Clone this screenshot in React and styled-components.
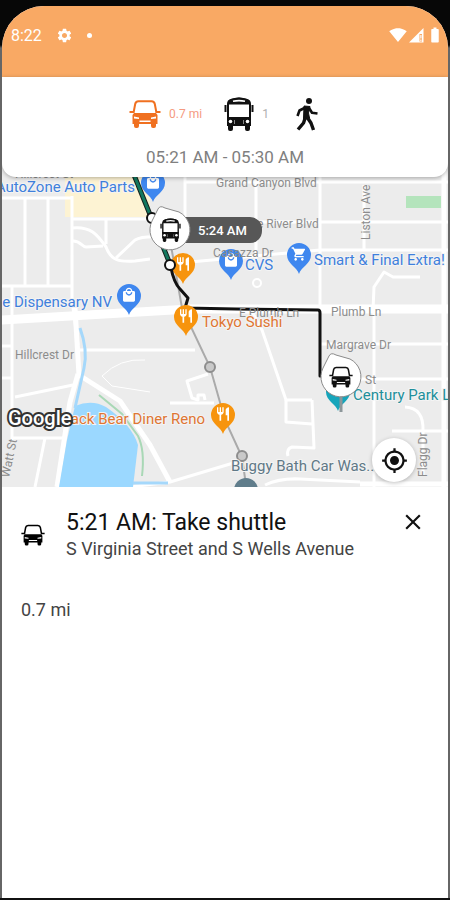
import React from 'react'
import styled, { createGlobalStyle } from 'styled-components'
import {
  MdBatteryFull,
  MdClose,
  MdLocalMall,
  MdMyLocation,
  MdRestaurant,
  MdSettings,
  MdShoppingCart,
  MdSignalWifi4Bar,
} from 'react-icons/md'

const roads = [
  'M0 198H72', 'M25 198V286', 'M48 198V286', 'M72 196V300L78 345', 'M0 286H72', 'M12 286V440',
  'M72 219H152', 'M106 219V244', 'M72 228C92 226 98 236 106 247C111 261 120 262 135 261L150 259',
  'M72 241C80 240 82 247 86 247L103 246', 'M116 258L135 240Q142 236 160 237L185 224V170',
  'M185 182H450', 'M256 170V262', 'M256 222H450', 'M190 262L320 250H450', 'M320 175V308', 'M364 185V250',
  'M373 310L374 287L384 272L393 277H420', 'M374 310V487', 'M0 346H12', 'M0 378H12', 'M80 350H195',
  'M15 397L73 385', 'M12 438H66', 'M45 438L35 487', 'M312 400H286L262 330L250 308',
  'M286 400L286 422L312 424', 'M312 400L314 448L292 447Q286 449 288 456', 'M130 487L170 482L240 461',
  'M320 344H450', 'M340 379H450', 'M392 431H450', 'M405 407Q424 408 423 431V475', 'M170 403H214',
  'M208 374L187 381L192 398L198 400L198 395H204L205 400', 'M265 485Q280 478 300 479L360 482',
]

const wideRoads = [
  'M78 374L70 402L57 487', 'M75 308L79 375L120 401L150 445L170 482', 'M444 170V487', 'M360 484H450',
]

const streets = [
  { x: 216, y: 187, text: 'Grand Canyon Blvd' },
  { x: 238, y: 228, text: 'Lake River Blvd' },
  { x: 213, y: 257, text: 'Casazza Dr' },
  { x: 239, y: 317, text: 'E Plumb Ln' },
  { x: 331, y: 316, text: 'Plumb Ln' },
  { x: 326, y: 349, text: 'Margrave Dr' },
  { x: 365, y: 384, text: 'St' },
  { x: 15, y: 359, text: 'Hillcrest Dr' },
  { x: 15, y: 178, text: 'Hillcrest St' },
]

const BusIcon = ({ detail = 'white', ...props }) => (
  <svg viewBox="0 0 30 34" {...props}>
    <path d="M4 21V7Q4 4 7 3Q15 0 23 3Q26 4 26 7V21Z" fill={detail} stroke="currentColor" strokeWidth="2" />
    <path d="M4 6Q4 3 7 2Q15 -1 23 2Q26 3 26 6V7.500H4Z" fill="currentColor" />
    <path d="M9 4.300Q15 3 21 4.300" fill="none" stroke={detail} strokeWidth="1.6" />
    <path d="M0.500 8H2.500V15H0.500ZM27.500 8H29.500V15H27.500Z" fill="currentColor" />
    <path d="M3 20H27V29H3Z" fill="currentColor" />
    <path d="M4 28H9V32Q9 34 7 34H6Q4 34 4 32ZM21 28H26V32Q26 34 24 34H23Q21 34 21 32Z" fill="currentColor" />
    <circle cx="6.500" cy="24.500" r="1.800" fill={detail} />
    <circle cx="23.500" cy="24.500" r="1.800" fill={detail} />
    <path d="M10.500 23V27M19.500 23V27" stroke={detail} strokeWidth="0.500" />
  </svg>
)

const ShuttleIcon = (props) => (
  <svg viewBox="0 0 32 28" {...props}>
    <path
      d="M4.500 13L6.200 4Q6.700 1.500 9.500 1.300H22.500Q25.300 1.500 25.800 4L27.500 13"
      fill="none" stroke="currentColor" strokeWidth="2"
    />
    <path d="M0.500 11H5V13H0.500ZM27 11H31.500V13H27Z" fill="currentColor" />
    <path
      fillRule="evenodd" fill="currentColor"
      d="M5 13H27L28.500 15V24H27V26Q27 28 25 28H24Q22 28 22 26V24H10V26Q10 28 8 28H7Q5 28 5 26V24H3.500V15ZM5 16.500V18.500L10 19V17.500ZM27 16.500V18.500L22 19V17.500ZM10.500 20.500V22H21.500V20.500Z"
    />
  </svg>
)

const WalkIcon = () => (
  <svg width="30" height="34" viewBox="-4 0 30 34" fill="none" stroke="currentColor" strokeLinejoin="round">
    <circle cx="14" cy="4" r="3" fill="currentColor" stroke="none" />
    <path d="M9 9L15 9.500L13.500 16L14.500 21L8.500 22Z" fill="currentColor" strokeWidth="1" />
    <path d="M10.500 10.500L4.500 13.500L2.500 19M14 11L17 15.800L22.500 16.500" strokeWidth="2.600" />
    <path d="M10.500 20L8.500 26L3 32.500M12 20L16 26L18.500 33" strokeWidth="3.400" />
  </svg>
)

const SignalIcon = () => (
  <svg width="15" height="15" viewBox="0 0 15 15">
    <path d="M0 14.500L14.500 0V14.500Z" fill="currentColor" />
    <path d="M10.500 6H13V13.500H10.500Z" fill="#f9a964" />
    <path d="M11.300 7H12.500V10.500H11.300ZM11.300 11.500H12.500V13H11.300Z" fill="currentColor" />
  </svg>
)

const Pin = ({ x, y, color, icon: Icon }) => (
  <g transform={`translate(${x} ${y})`}>
    <path d="M0 19C-2 12-12 9-12 0A12 12 0 0 1 12 0C12 9 2 12 0 19Z" fill={color} />
    {Icon && <Icon x="-8" y="-9" width="16" height="16" color="white" />}
  </g>
)

const VehicleMarker = ({ x, y, children }) => (
  <g transform={`translate(${x} ${y})`}>
    <path
      d="M-18 -9L-12 -21Q-10 -25 -5 -22L9 -18A20 20 0 1 1 -18 -9Z"
      fill="white" stroke="#8a8a8a" strokeWidth="1"
    />
    {children}
  </g>
)

function RouteMap() {
  return (
    <MapArea>
      <MapCanvas viewBox="2 165 446 322" preserveAspectRatio="xMidYMid slice" role="img" aria-label="Route map">
        <rect x="-400" y="165" width="1300" height="322" fill="#ececec" />
        <path d="M65 165H150V217H65Z" fill="#fdf3d3" />
        <path d="M406 196H441V208H406Z" fill="#b4e4bc" />
        <g fill="none" stroke="white" strokeLinejoin="round">
          {roads.map((d) => <path key={d} d={d} strokeWidth="3" />)}
          {wideRoads.map((d) => <path key={d} d={d} strokeWidth="5" />)}
          <path d="M0 320L190 309H450" strokeWidth="9" />
          <path d="M145 360Q120 358 102 376L112 386L150 392" strokeWidth="1" />
          <circle cx="257" cy="283" r="4" strokeWidth="2" />
        </g>
        <path d="M75 406Q92 399 106 407Q132 425 138 445L133 487H59L67 440Z" fill="#9bd8ff" />
        <path d="M80 328Q88 350 84 368L75 408M133 483H168" fill="none" stroke="#a5d8fb" strokeWidth="3" />
        <path d="M99 395L122 414L138 436Q145 450 142 476" fill="none" stroke="#a9d8b6" strokeWidth="2" />

        <path d="M170 240L182 308L210 367L225 420L242 457L246 485" fill="none" stroke="#aaa" strokeWidth="2" />
        <circle cx="210" cy="367" r="5" fill="#c9c9c9" stroke="#8d8d8d" strokeWidth="2" />
        <circle cx="242" cy="456" r="5" fill="#c9c9c9" stroke="#8d8d8d" strokeWidth="2" />

        <Pin x="153" y="183" color="#3f87ef" icon={MdLocalMall} />
        <Pin x="129" y="296" color="#3f87ef" icon={MdLocalMall} />
        <Pin x="231" y="261" color="#3f87ef" icon={MdLocalMall} />
        <Pin x="299" y="255" color="#3f87ef" icon={MdShoppingCart} />
        <Pin x="183" y="265" color="#f7940d" icon={MdRestaurant} />
        <Pin x="223" y="415" color="#f7940d" icon={MdRestaurant} />
        <circle cx="246" cy="490" r="12" fill="#607d8b" />
        <Pin x="338" y="392" color="#16a5bb" />
        <path d="M341 390V412" stroke="#8d979a" strokeWidth="3" />

        <g fill="none" strokeLinejoin="round">
          <path d="M130 165L153 222L170 264" stroke="#17231f" strokeWidth="5" />
          <path d="M130 165L153 222L170 264" stroke="#12785f" strokeWidth="3" />
          <path
            d="M171 268Q174 283 180 289L188 298L185 308L236 309L318 310Q320 310 320 313V376H326"
            stroke="#111" strokeWidth="3"
          />
        </g>
        <Pin x="186" y="317" color="#f7940d" icon={MdRestaurant} />

        {streets.map(({ x, y, text }) => <Street key={text} x={x} y={y}>{text}</Street>)}
        <Street transform="translate(370 240) rotate(-90)">Liston Ave</Street>
        <Street transform="translate(427 477) rotate(-90)">Flagg Dr</Street>
        <Street transform="translate(9 478) rotate(-78)">Watt St</Street>

        <Place x="135" y="192" textAnchor="end">AutoZone Auto Parts</Place>
        <Place x="245" y="270">CVS</Place>
        <Place x="314" y="265">Smart &amp; Final Extra!</Place>
        <Place x="112" y="307" textAnchor="end">The Dispensary NV</Place>
        <Place x="202" y="327" $color="#df7633">Tokyo Sushi</Place>
        <Place x="205" y="424" textAnchor="end" $color="#df7633">Black Bear Diner Reno</Place>
        <Place x="231" y="471" $color="#607886">Buggy Bath Car Was...</Place>
        <Place x="353" y="400" $color="#218f9b">Century Park Lofts</Place>

        <circle cx="152" cy="218" r="5" fill="white" stroke="#111" strokeWidth="2" />
        <circle cx="170" cy="265" r="5" fill="white" stroke="#111" strokeWidth="2" />

        <rect x="166" y="217" width="96" height="26" rx="12" fill="#575757" />
        <EtaText x="198" y="235">5:24 AM</EtaText>
        <VehicleMarker x={170} y={230}>
          <BusIcon x="-10" y="-12" width="21" height="24" color="#111" />
        </VehicleMarker>
        <VehicleMarker x={341} y={377}>
          <ShuttleIcon x="-12" y="-11" width="24" height="22" color="#111" />
        </VehicleMarker>
        <Attribution x="8" y="425">Google</Attribution>
      </MapCanvas>
      <LocateButton type="button" aria-label="Center on my location">
        <MdMyLocation size={27} />
      </LocateButton>
    </MapArea>
  )
}

export default function App() {
  return (
    <Screen>
      <GlobalStyle />
      <Phone>
        <StatusBar>
          <StatusGroup $gap={14}>
            <span>8:22</span>
            <MdSettings size={17} />
            <Dot />
          </StatusGroup>
          <StatusGroup $gap={2}>
            <MdSignalWifi4Bar size={18} />
            <SignalIcon />
            <MdBatteryFull size={18} />
          </StatusGroup>
        </StatusBar>
        <TripCard>
          <Legs>
            <Leg $active>
              <ShuttleIcon width="32" height="28" />
              <LegNote $color="#f59a80">0.7 mi</LegNote>
            </Leg>
            <Leg>
              <BusIcon width="30" height="34" />
              <LegNote>1</LegNote>
            </Leg>
            <Leg>
              <WalkIcon />
            </Leg>
          </Legs>
          <TripTime>05:21 AM - 05:30 AM</TripTime>
        </TripCard>
        <RouteMap />
        <StepPanel>
          <StepHeader>
            <ShuttleIcon width="24" height="24" />
            <StepText>
              <StepTitle>5:21 AM: Take shuttle</StepTitle>
              <StepPlace>S Virginia Street and S Wells Avenue</StepPlace>
            </StepText>
            <CloseButton type="button" aria-label="Close">
              <MdClose size={26} />
            </CloseButton>
          </StepHeader>
          <Distance>0.7 mi</Distance>
        </StepPanel>
      </Phone>
    </Screen>
  )
}

const GlobalStyle = createGlobalStyle`
  * {
    box-sizing: border-box;
  }
  body {
    margin: 0;
    font-family: Roboto, 'Liberation Sans', sans-serif;
  }
  h1, p {
    margin: 0;
  }
`
const Screen = styled.div`
  display: flex;
  min-height: 100vh;
  padding: 6px 2px 2px;
  background: linear-gradient(#070707 45px, #666 48px, #666 calc(100% - 2px), #111 calc(100% - 2px));
`
const Phone = styled.main`
  display: flex;
  flex-direction: column;
  flex: 1;
  min-width: 0;
  overflow: hidden;
  border-radius: 42px 42px 0 0;
  background: #fff;
`
const StatusBar = styled.div`
  display: flex;
  justify-content: space-between;
  height: 71px;
  padding: 18px 4px 0 9px;
  background: #f9a964;
  color: #fff;
  font-size: 16px;
`
const StatusGroup = styled.div`
  display: flex;
  align-items: center;
  gap: ${({ $gap }) => $gap}px;
  height: 22px;
`
const Dot = styled.span`
  width: 5px;
  height: 5px;
  border-radius: 50%;
  background: #fff;
`
const TripCard = styled.header`
  position: relative;
  z-index: 1;
  display: flex;
  flex-direction: column;
  align-items: center;
  gap: 16px;
  padding: 19px 0 10px;
  border-radius: 0 0 14px 14px;
  background: #fff;
  box-shadow: 0 1px 4px rgba(0, 0, 0, 0.3);
`
const Legs = styled.div`
  display: flex;
  align-items: center;
  gap: 22px;
`
const Leg = styled.div`
  display: flex;
  align-items: center;
  gap: 8px;
  height: 35px;
  color: ${({ $active }) => ($active ? '#f07020' : '#111')};
`
const LegNote = styled.span`
  color: ${({ $color = '#b0b0b0' }) => $color};
  font-size: 12px;
`
const TripTime = styled.p`
  color: #808080;
  font-size: 17px;
  line-height: 20px;
`
const MapArea = styled.section`
  position: relative;
  height: 322px;
  margin-top: -12px;
  overflow: hidden;
`
const MapCanvas = styled.svg`
  display: block;
  width: 100%;
  height: 100%;
`
const Street = styled.text`
  fill: #8c8c8c;
  font-size: 12px;
`
const Place = styled.text`
  fill: ${({ $color = '#3f80dc' }) => $color};
  stroke: #f4f4f4;
  stroke-width: 2px;
  paint-order: stroke;
  font-size: 15px;
`
const EtaText = styled.text`
  fill: #fff;
  font-size: 13px;
  font-weight: 500;
`
const Attribution = styled.text`
  fill: #fff;
  stroke: #333;
  stroke-width: 4px;
  paint-order: stroke;
  font-size: 20px;
  font-weight: 500;
`
const LocateButton = styled.button`
  position: absolute;
  right: 32px;
  bottom: 5px;
  display: flex;
  align-items: center;
  justify-content: center;
  width: 44px;
  height: 44px;
  padding: 0;
  border: 0;
  border-radius: 50%;
  background: #fff;
  color: #111;
  box-shadow: 0 1px 4px rgba(0, 0, 0, 0.25);
`
const StepPanel = styled.section`
  display: flex;
  flex-direction: column;
  gap: 37px;
  padding: 22px 22px 22px 19px;
`
const StepHeader = styled.div`
  display: flex;
  align-items: center;
  gap: 21px;
`
const StepText = styled.div`
  flex: 1;
  min-width: 0;
`
const StepTitle = styled.h1`
  color: #111;
  font-size: 23px;
  font-weight: 400;
  line-height: 28px;
`
const StepPlace = styled.p`
  color: #444;
  font-size: 18px;
  line-height: 24px;
  white-space: nowrap;
`
const CloseButton = styled.button`
  display: flex;
  align-self: flex-start;
  padding: 0;
  border: 0;
  background: none;
  color: #111;
`
const Distance = styled.p`
  color: #444;
  font-size: 18px;
  line-height: 24px;
`
